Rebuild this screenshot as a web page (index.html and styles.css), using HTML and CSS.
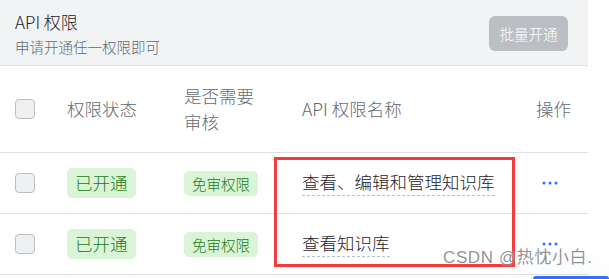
FILE: index.html
```html
<!DOCTYPE html>
<html lang="zh-CN">
<head>
    <meta charset="UTF-8">
    <meta name="viewport" content="width=device-width, initial-scale=1.0">
    <title>API 权限</title>
    <link rel="stylesheet" href="styles.css">
</head>
<body>
    <div class="panel">
        <div class="panel_head">
            <div class="head_text">
                <div class="head_title">API 权限</div>
                <div class="head_sub">申请开通任一权限即可</div>
            </div>
            <button class="batch_btn" disabled>批量开通</button>
        </div>
        <div class="row row_head">
            <div class="cell cell_check"><span class="checkbox"></span></div>
            <div class="cell">权限状态</div>
            <div class="cell"><span class="wrap_narrow">是否需要审核</span></div>
            <div class="cell">API 权限名称</div>
            <div class="cell">操作</div>
        </div>
        <div class="row">
            <div class="cell cell_check"><span class="checkbox"></span></div>
            <div class="cell"><span class="tag tag_big">已开通</span></div>
            <div class="cell"><span class="tag tag_small">免审权限</span></div>
            <div class="cell"><span class="perm_name">查看、编辑和管理知识库</span></div>
            <div class="cell cell_more">
                <svg width="16" height="4" viewBox="0 0 16 4"><circle cx="2" cy="2" r="1.5"/><circle cx="8" cy="2" r="1.5"/><circle cx="14" cy="2" r="1.5"/></svg>
            </div>
        </div>
        <div class="row">
            <div class="cell cell_check"><span class="checkbox"></span></div>
            <div class="cell"><span class="tag tag_big">已开通</span></div>
            <div class="cell"><span class="tag tag_small">免审权限</span></div>
            <div class="cell"><span class="perm_name">查看知识库</span></div>
            <div class="cell cell_more">
                <svg width="16" height="4" viewBox="0 0 16 4"><circle cx="2" cy="2" r="1.5"/><circle cx="8" cy="2" r="1.5"/><circle cx="14" cy="2" r="1.5"/></svg>
            </div>
        </div>
    </div>
    <!-- annotation drawn over the screenshot -->
    <div class="mark_box"></div>
    <div class="watermark">CSDN @热忱小白.</div>
    <div class="float_btn"></div>
</body>
</html>
```

FILE: styles.css
```css
body, html{
    padding: 0;
    margin: 0;
    width: 100%;
    height: 100%;
    overflow: hidden;
}
body{
    position: relative;
    background: #ffffff;
    font-family: "Noto Sans CJK SC", "Noto Sans", sans-serif;
    font-weight: 300;
    color: #1f2329;
}
.panel{
    width: 588px;
}
.panel_head{
    display: flex;
    align-items: flex-start;
    justify-content: space-between;
    height: 66px;
    box-sizing: border-box;
    padding: 10px 20px 0 15px;
    background: #f2f3f5;
    border-bottom: 1px solid #dee0e3;
}
.head_title{
    font-size: 17px;
    line-height: 24px;
    color: #1f2329;
}
.head_sub{
    margin-top: 2px;
    font-size: 14.5px;
    line-height: 22px;
    color: #646a73;
}
.batch_btn{
    margin-top: 6px;
    width: 79px;
    height: 35px;
    padding: 0;
    border: none;
    border-radius: 6px;
    background: #bbbfc4;
    color: #ffffff;
    font-family: inherit;
    font-weight: 300;
    font-size: 14.5px;
}
.row{
    display: grid;
    grid-template-columns: 67px 117px 118px 234px 1fr;
    align-items: center;
    height: 60px;
    border-bottom: 1px solid #dee0e3;
    font-size: 17.5px;
}
.row_head{
    height: 86px;
    color: #646a73;
    line-height: 26px;
}
.cell{
    display: flex;
    align-items: center;
}
.cell_check{
    padding-left: 15px;
}
.checkbox{
    width: 20px;
    height: 20px;
    box-sizing: border-box;
    border: 1px solid #bbbfc4;
    border-radius: 4px;
    background: #eff0f1;
}
.wrap_narrow{
    width: 76px;
}
.tag{
    border-radius: 5px;
    background: #d9f5d6;
    color: #237b19;
}
.tag_big{
    padding: 0 8px;
    font-size: 17.5px;
    line-height: 30px;
}
.tag_small{
    padding: 0 8px;
    font-size: 14.5px;
    line-height: 25px;
}
.perm_name{
    line-height: 24px;
    padding-bottom: 1px;
    border-bottom: 1px dashed #bbbfc4;
}
.cell_more{
    padding-left: 6px;
    fill: #3370ff;
}
.mark_box{
    position: absolute;
    left: 274px;
    top: 157px;
    width: 241px;
    height: 110px;
    box-sizing: border-box;
    border: 3px solid #f33b3b;
}
.watermark{
    position: absolute;
    left: 443px;
    top: 247px;
    font-family: "Liberation Sans", "Noto Sans CJK SC", sans-serif;
    font-weight: 400;
    font-size: 17px;
    line-height: 22px;
    letter-spacing: 0.6px;
    color: rgba(110, 110, 110, 0.75);
    text-shadow: 0 0 2px rgba(255, 255, 255, 0.9);
}
.float_btn{
    position: absolute;
    left: 533px;
    top: 276px;
    width: 76px;
    height: 3px;
    border-radius: 8px 8px 0 0;
    background: #3370ff;
    box-shadow: 0 0 24px rgba(51, 112, 255, 0.18);
}
```
